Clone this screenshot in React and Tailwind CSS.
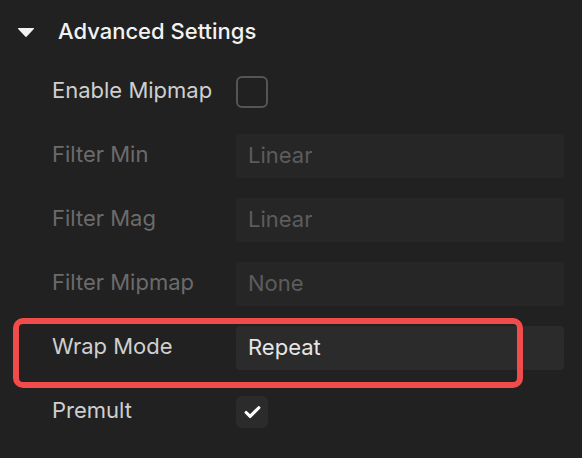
import { Check } from "lucide-react";

const rows = [
  { label: "Filter Min", value: "Linear" },
  { label: "Filter Mag", value: "Linear" },
  { label: "Filter Mipmap", value: "None" },
];

function Row({ label, children, dim }) {
  return (
    <div className="relative flex h-16 items-center pl-[52px] pr-[18px]">
      <div className={`w-[184px] pb-[3px] text-[22px] ${dim ? "text-[#6b6b6b]" : "text-[#cfcfcf]"}`}>{label}</div>
      {children}
    </div>
  );
}

export default function App() {
  return (
    <div className="h-[458px] w-[582px] bg-[#212121] pt-1 font-['Inter','Noto_Sans',sans-serif]">
      {/* Header */}
      <div className="flex h-14 items-center gap-[23px] pl-[17px]">
        <svg width="18" height="11" viewBox="0 0 18 11">
          <path d="M1.5 1 H16.5 Q17.5 1 16.8 1.9 L9.8 9.6 Q9 10.4 8.2 9.6 L1.2 1.9 Q0.5 1 1.5 1 Z" fill="#f2f2f2" />
        </svg>
        <span className="pb-[2px] text-[22px] font-medium text-[#f2f2f2]">Advanced Settings</span>
      </div>

      <Row label="Enable Mipmap">
        <div className="h-8 w-8 rounded-md border-2 border-[#555555]" />
      </Row>

      {rows.map((r) => (
        <Row key={r.label} label={r.label} dim>
          <div className="flex h-11 flex-1 items-center bg-[#262626] px-3 pb-[2px] text-[22px] text-[#5c5c5c]">{r.value}</div>
        </Row>
      ))}

      <Row label="Wrap Mode">
        <div className="flex h-11 flex-1 items-center rounded-sm bg-[#2b2b2b] px-3 pb-[2px] text-[22px] text-[#e6e6e6]">Repeat</div>
        {/* highlight annotation */}
        <div className="absolute left-[13px] top-[2px] h-[70px] w-[510px] rounded-[10px] border-[6px] border-[#f24b4b]" />
      </Row>

      <Row label="Premult">
        <div className="flex h-8 w-8 items-center justify-center rounded-md bg-[#2b2b2b]">
          <Check size={19} strokeWidth={4} color="#ffffff" />
        </div>
      </Row>
    </div>
  );
}
